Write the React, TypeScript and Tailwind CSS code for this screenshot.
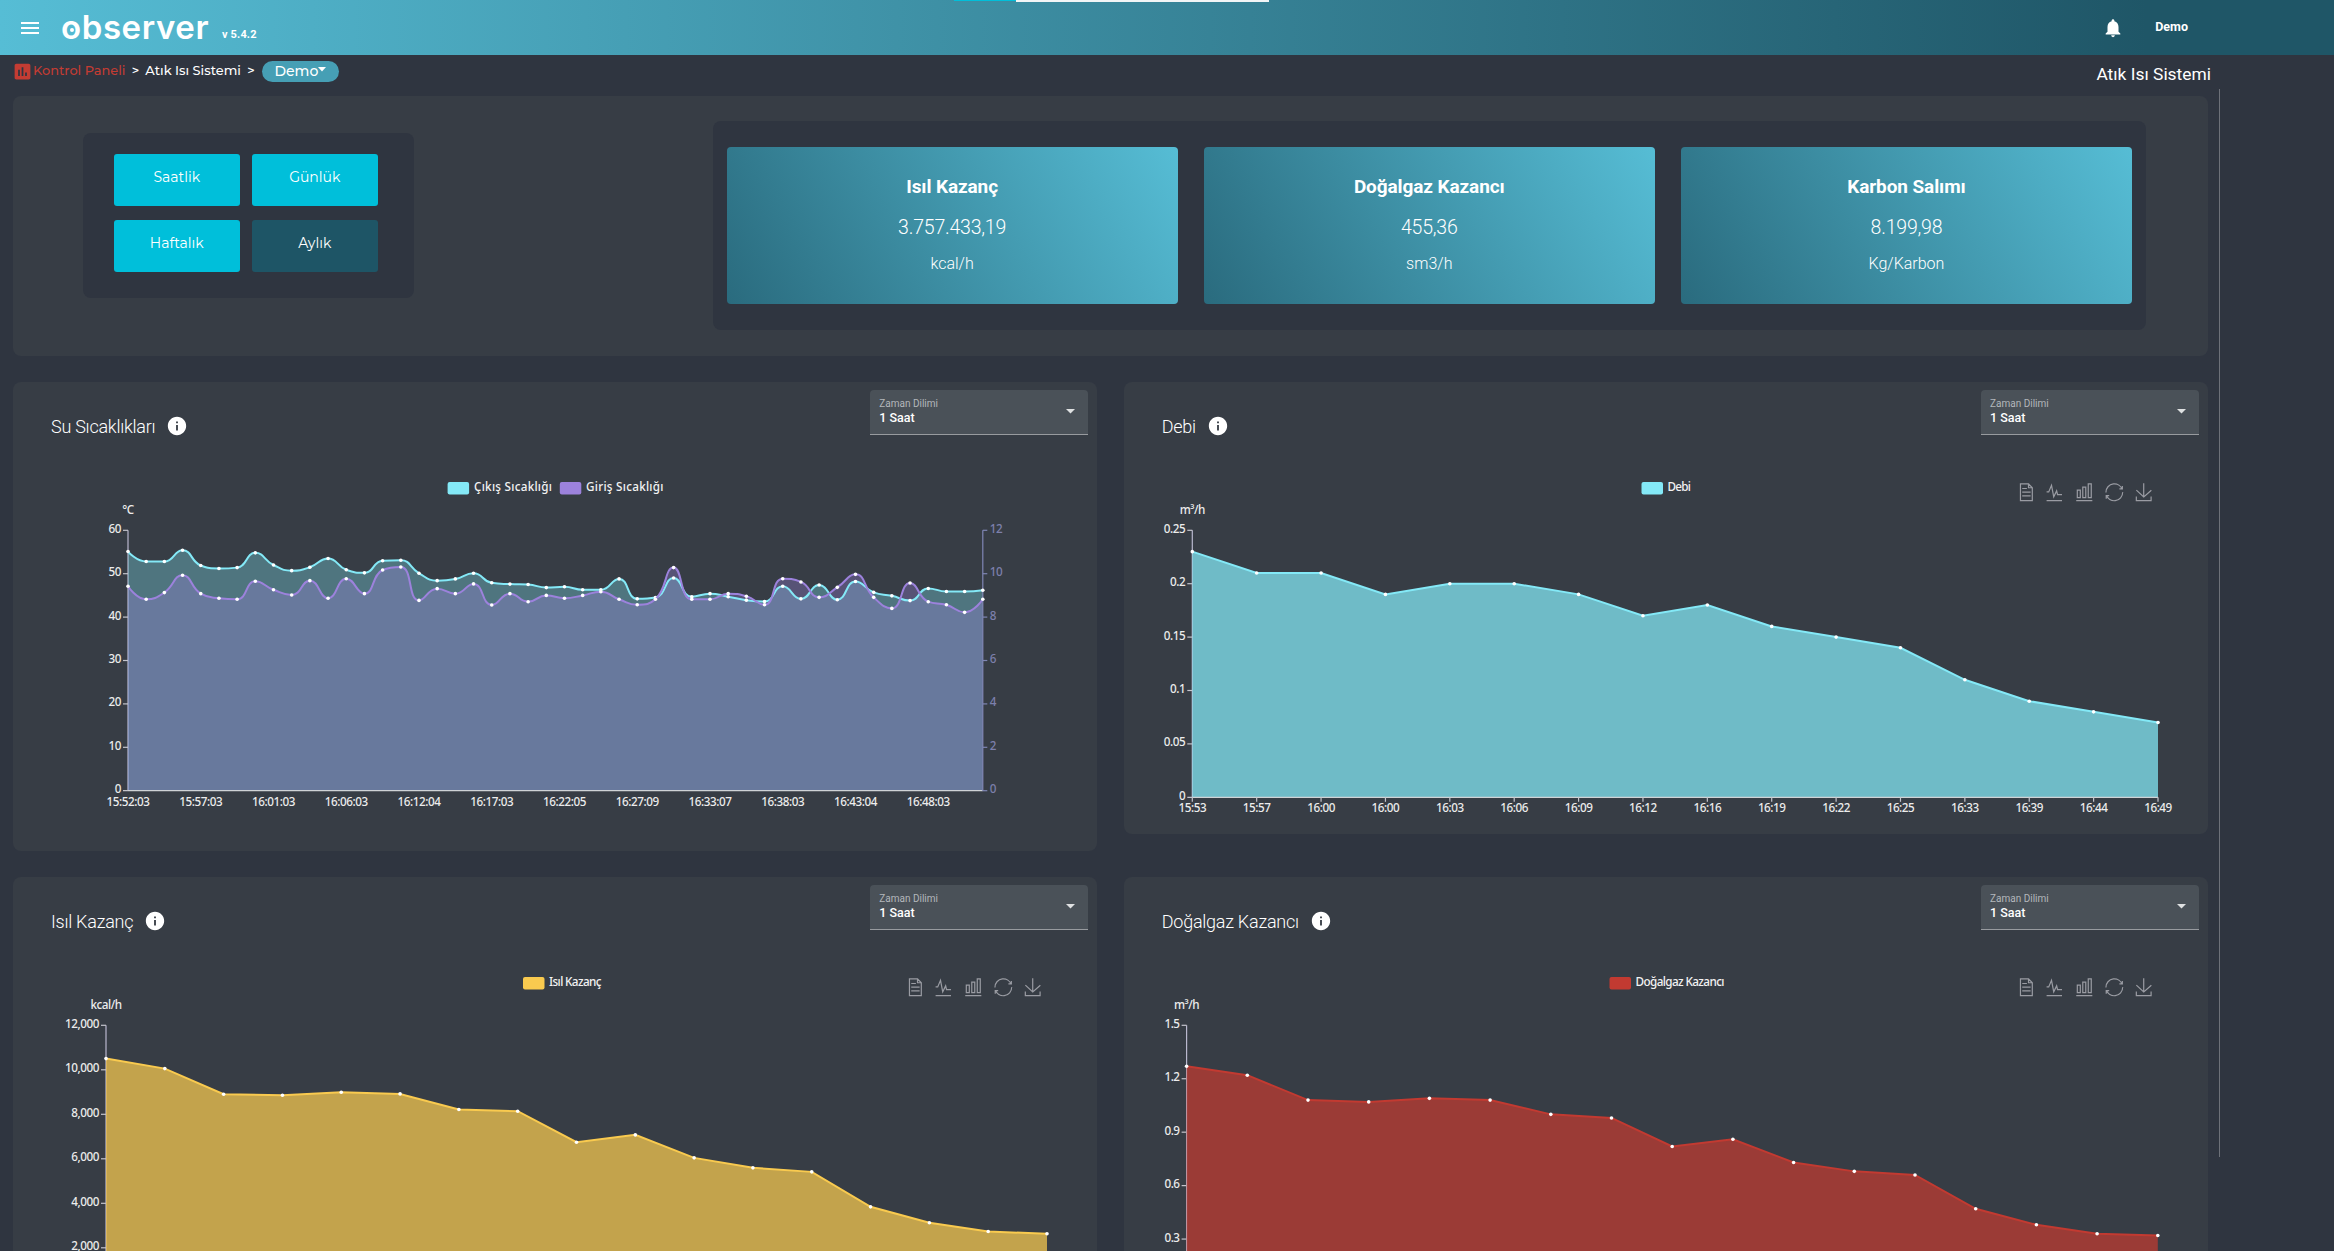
import React from "react";
import { MdAssessment, MdInfo, MdMenu, MdNotifications } from "react-icons/md";

type Point = { x: number; y: number };

type Axis = {
  max: number;
  labels: string[];
};

type Series = {
  name: string;
  color: string;
  data: number[];
  max: number;
  opacity: number;
  smooth?: boolean;
};

type ChartProps = {
  unit: string;
  left: number;
  right: number;
  bottom: number;
  height: number;
  axis: Axis;
  rightAxis?: Axis;
  xLabels: string[];
  xEvery: number;
  xTicks?: boolean;
  series: Series[];
  legend: { swatch: number; text: number; width: number }[];
  toolbox?: boolean;
};

const TOP = 148.3;

const outTemps = [
  55.1, 52.8, 52.8, 55.4, 51.9, 51.2, 51.4, 54.8, 52, 50.7, 51.5, 53.5, 50.9, 50.2, 53, 53.1, 50.1, 48.4, 48.8, 50.1,
  47.9, 47.6, 47.5, 46.8, 47, 46.3, 46.3, 48.8, 44.2, 44.5, 49, 44.7, 45.4, 44.7, 43.9, 43.6, 47.1, 44.2, 47.4, 44,
  48.2, 45.7, 44.9, 43.8, 46.6, 45.9, 45.9, 46.2,
];

const inTemps = [
  9.42, 8.82, 9.13, 9.93, 9.08, 8.87, 8.82, 9.65, 9.26, 9.02, 9.68, 8.87, 9.77, 9.08, 10.17, 10.31, 8.77, 9.31, 9.08,
  9.53, 8.56, 9.08, 8.71, 9, 8.87, 9, 9.17, 8.82, 8.57, 8.82, 10.28, 8.82, 8.82, 9.08, 8.96, 8.57, 9.77, 9.62, 8.91,
  9.37, 9.97, 8.91, 8.4, 9.57, 8.71, 8.57, 8.22, 8.82,
];

const flow = [0.23, 0.21, 0.21, 0.19, 0.2, 0.2, 0.19, 0.17, 0.18, 0.16, 0.15, 0.14, 0.11, 0.09, 0.08, 0.07];

const heat = [
  10503, 10054, 8901, 8856, 8991, 8916, 8213, 8138, 6745, 7075, 6042, 5593, 5413, 3841, 3123, 2733, 2629,
];

const gas = [1.27, 1.22, 1.08, 1.07, 1.09, 1.08, 1, 0.98, 0.82, 0.86, 0.73, 0.68, 0.66, 0.47, 0.38, 0.33, 0.32];

// cx is the horizontal middle of each path
const tools = [
  {
    x: 902.3,
    cx: 31,
    d: "M17.5,17.3H33 M45.4,29.5h-28 M11.5,2v56H51V14.8L38.4,2H11.5z M38.4,2.2v12.7H51 M45.4,41.7h-28",
  },
  { x: 930.3, cx: 29.8, d: "M4.1,28.9h7.1l9.3-22l7.4,38l9.7-19.7l3,12.8h14.9M4.1,58h51.4" },
  { x: 960.3, cx: 30, d: "M6.7,22.9h10V48h-10V22.9zM24.9,13h10v35h-10V13zM43.2,2h10v46h-10V2zM3.1,58h53.7" },
  {
    x: 990.3,
    cx: 30,
    d: "M47,18.9h9.8V8.7 M56.3,20.1 C52.1,9,40.5,0.6,26.8,2.1C12.6,3.7,1.6,16.2,2.1,30.6 M13,41.1H3.1v10.2 M3.7,39.9c4.2,11.1,15.8,19.5,29.5,18 c14.2-1.6,25.2-14.1,24.7-28.5",
  },
  { x: 1019.8, cx: 29.5, d: "M4.7,22.9L29.3,45.5L54.7,23.4M4.6,43.6L4.6,58L53.8,58L53.8,43.6M29.2,45.1L29.2,0" },
];

const clamp = (v: number, a: number, b: number) => Math.max(Math.min(v, Math.max(a, b)), Math.min(a, b));

function straightPath(pts: Point[]) {
  return pts.map((p, i) => `${i ? "L" : "M"}${p.x},${p.y}`).join("");
}

function smoothPath(pts: Point[]) {
  let d = `M${pts[0].x},${pts[0].y}`;
  let cp = pts[0];
  for (let i = 1; i < pts.length; i++) {
    const p = pts[i];
    const prev = pts[i - 1];
    const next = pts[i + 1];
    let before = p;
    let after = p;
    if (next) {
      const lenPrev = Math.hypot(p.x - prev.x, p.y - prev.y);
      const lenNext = Math.hypot(next.x - p.x, next.y - p.y);
      const ratio = lenNext / (lenNext + lenPrev);
      const vx = (next.x - prev.x) * 0.5;
      const vy = (next.y - prev.y) * 0.5;
      after = { x: clamp(p.x + vx * ratio, p.x, next.x), y: clamp(p.y + vy * ratio, p.y, next.y) };
      const k = lenPrev / lenNext;
      before = {
        x: clamp(p.x - (after.x - p.x) * k, prev.x, p.x),
        y: clamp(p.y - (after.y - p.y) * k, prev.y, p.y),
      };
      after = { x: p.x + (p.x - before.x) / k, y: p.y + (p.y - before.y) / k };
    }
    d += `C${cp.x},${cp.y} ${before.x},${before.y} ${p.x},${p.y}`;
    cp = after;
  }
  return d;
}

function Chart(props: ChartProps) {
  const { unit, left, right, bottom, height, axis, rightAxis, xLabels, xEvery, xTicks, series, legend, toolbox } = props;
  const count = series[0].data.length;
  const step = (right - left) / (count - 1);
  const tickY = (i: number, n: number) => bottom - ((bottom - TOP) * i) / (n - 1);

  return (
    <svg
      width="1084"
      height={height}
      viewBox={`0 62 1084 ${height}`}
      className="block shrink-0 font-['Noto_Sans','Open_Sans',sans-serif] text-[11.7px] tracking-[-0.45px] font-medium"
    >
      {series.map((s, i) => (
        <g key={s.name}>
          <rect x={legend[i].swatch} y={100} width={21.5} height={12.5} rx={2} fill={s.color} />
          <text x={legend[i].text} y={109} textLength={legend[i].width} fill="#f2f2f2">
            {s.name}
          </text>
        </g>
      ))}

      {toolbox &&
        tools.map((t) => (
          <path
            key={t.x}
            d={t.d}
            transform={`translate(${t.x - t.cx * 0.3} ${110.3 - 9}) scale(0.3)`}
            fill="none"
            stroke="#9a9ca3"
            strokeWidth={4}
          />
        ))}

      <text x={left} y={132} textAnchor="middle" fill="#ececec">
        {unit}
      </text>
      <path d={`M${left},${TOP}V${bottom}`} stroke="#b9b8ce" strokeWidth={1.2} />
      {axis.labels.map((l, i) => (
        <g key={l}>
          <path d={`M${left - 5},${tickY(i, axis.labels.length)}h5`} stroke="#c4c4cc" strokeWidth={1.2} />
          <text x={left - 7} y={tickY(i, axis.labels.length) + 2.5} textAnchor="end" fill="#ececec">
            {l}
          </text>
        </g>
      ))}

      {series.map((s) => {
        const pts = s.data.map((v, i) => ({ x: left + step * i, y: bottom - (v / s.max) * (bottom - TOP) }));
        const line = s.smooth ? smoothPath(pts) : straightPath(pts);
        return (
          <path key={s.name} d={`${line}V${bottom}H${left}Z`} fill={s.color} fillOpacity={s.opacity} />
        );
      })}

      <path d={`M${left},${bottom}H${right}`} stroke="#cfd3d6" strokeWidth={1.3} />
      {xLabels.map((l, i) => (
        <g key={i}>
          {xTicks && <path d={`M${left + step * i * xEvery},${bottom}v4.5`} stroke="#c4c4cc" strokeWidth={1.2} />}
          <text x={left + step * i * xEvery} y={bottom + 15} textAnchor="middle" fill="#ececec">
            {l}
          </text>
        </g>
      ))}

      {rightAxis && (
        <g>
          <path d={`M${right},${TOP}V${bottom}`} stroke="#7f86b4" strokeWidth={1.2} />
          {rightAxis.labels.map((l, i) => (
            <g key={l}>
              <path d={`M${right},${tickY(i, rightAxis.labels.length)}h4.5`} stroke="#7f86b4" strokeWidth={1.2} />
              <text x={right + 7} y={tickY(i, rightAxis.labels.length) + 2.5} fill="#7d80ac">
                {l}
              </text>
            </g>
          ))}
        </g>
      )}

      {series.map((s) => {
        const pts = s.data.map((v, i) => ({ x: left + step * i, y: bottom - (v / s.max) * (bottom - TOP) }));
        return (
          <g key={s.name}>
            <path d={s.smooth ? smoothPath(pts) : straightPath(pts)} fill="none" stroke={s.color} strokeWidth={2} />
            {pts.map((p, i) => (
              <circle key={i} cx={p.x} cy={p.y} r={1.8} fill="#ffffff" />
            ))}
          </g>
        );
      })}
    </svg>
  );
}

function TimeSelect() {
  return (
    <div className="mt-[8px] mr-[9px] w-[217.5px] h-[45.5px] rounded-t bg-[#4a5158] border-b border-[#989b9f] flex items-center justify-between pl-[9px] pr-[13px]">
      <div>
        <p className="text-[10px] leading-[13px] text-[#b3b7bb]">Zaman Dilimi</p>
        <p className="text-[12.5px] leading-4 font-medium text-white">1 Saat</p>
      </div>
      <svg width="9" height="5" viewBox="0 0 9 5">
        <path d="M0 0h9L4.5 4.5z" fill="#dfe1e2" />
      </svg>
    </div>
  );
}

function Panel({ title, className, children }: { title: string; className: string; children: React.ReactNode }) {
  return (
    <section className={`rounded-lg bg-[#373d45] overflow-hidden ${className}`}>
      <div className="h-[62px] flex justify-between">
        <div className="flex items-start gap-[11px] pl-[38px] pt-[33px]">
          <h3 className="font-light text-[18px] leading-6 tracking-[-0.25px] text-white">{title}</h3>
          <MdInfo className="size-[22px] text-white" />
        </div>
        <TimeSelect />
      </div>
      {children}
    </section>
  );
}

function PeriodButton({ label, active }: { label: string; active?: boolean }) {
  return (
    <button
      className={`w-[125.5px] h-[52px] rounded-[3px] pb-[5px] text-[14px] text-white ${
        active ? "bg-[#1e5566]" : "bg-[#00bfda]"
      }`}
    >
      {label}
    </button>
  );
}

function StatCard({ title, value, unit }: { title: string; value: string; unit: string }) {
  return (
    <div className="flex-1 h-[156.5px] rounded bg-[linear-gradient(60deg,#2a6b7e,#56bdd5)] text-white text-center pt-7">
      <p className="text-[19px] leading-6 font-bold tracking-[-0.1px]">{title}</p>
      <p className="mt-[17px] text-[19.5px] leading-6 font-light tracking-[-0.2px]">{value}</p>
      <p className="mt-3.5 text-[16px] leading-5 font-light">{unit}</p>
    </div>
  );
}

export default function App() {
  return (
    <div className="w-full h-[1251px] overflow-hidden bg-[#2f3540] font-[Roboto,sans-serif]">
      <header className="relative h-[55px] flex items-center bg-[linear-gradient(90deg,#56bdd5_0%,#1f5667_92%)] text-white">
        <MdMenu className="ml-[18px] size-6" />
        <h1 className="relative ml-[19px] w-[149px] font-[Inter,sans-serif] font-semibold text-[33px] leading-none tracking-[0.6px]">
          observer
          <span className="absolute left-[9px] top-[17px] size-[4px] rounded-full bg-white" />
        </h1>
        <span className="ml-3 mt-4 text-[11px] font-bold tracking-[0.15px]">v 5.4.2</span>
        <MdNotifications className="ml-auto size-[22px]" />
        <span className="ml-[31px] mr-[146px] text-[12.5px] font-bold">Demo</span>
        {/* loading bar */}
        <div className="absolute top-0 left-[954px] w-[315px] h-[2px] flex">
          <span className="w-[62px] h-px bg-[#00bfda]" />
          <span className="flex-1 bg-[#f2f5f6]" />
        </div>
      </header>

      <div className="h-[34px] w-[2220px] flex items-start justify-between text-white">
        <nav className="flex items-center pl-3 pt-1.5 h-[26px] font-[Montserrat,Inter,sans-serif] text-[12.9px] font-medium">
          <MdAssessment className="size-[21px] text-[#c43c33]" />
          <span className="text-[#c43c33]">Kontrol Paneli</span>
          <span className="ml-[6.5px]">&gt;</span>
          <span className="ml-[6px]">Atık Isı Sistemi</span>
          <span className="ml-[6.5px]">&gt;</span>
          <span className="ml-[7px] h-[21px] w-[77px] rounded-full bg-[#469fb5] flex items-center justify-center text-[14px]">
            Demo
            <svg width="8" height="5" viewBox="0 0 8 5" className="mb-1">
              <path d="M0 0h8L4 4.5z" fill="#ffffff" />
            </svg>
          </span>
        </nav>
        <h2 className="mr-[9px] pt-[5.5px] text-[17.4px]">Atık Isı Sistemi</h2>
      </div>

      <div className="flex">
        <main className="w-[2219px] shrink-0 pl-[13px] pr-[11.5px] pt-[6.5px]">
          <section className="h-[260px] rounded-lg bg-[#373d45] flex items-start justify-between pl-[70px] pr-[62px]">
            <div className="mt-[37px] w-[331px] h-[165px] rounded-lg bg-[#2f3540] pl-[31px] pt-[21.5px] grid grid-cols-[125.5px_125.5px] grid-rows-[52.5px_52.5px] gap-x-[12.5px] gap-y-[13.5px] font-[Montserrat,Inter,sans-serif]">
              <PeriodButton label="Saatlik" />
              <PeriodButton label="Günlük" />
              <PeriodButton label="Haftalık" />
              <PeriodButton label="Aylık" active />
            </div>
            <div className="mt-[25.5px] w-[1432.5px] h-[208.5px] rounded-lg bg-[#2f3540] flex gap-[26px] px-[13.5px] pt-[26px]">
              <StatCard title="Isıl Kazanç" value="3.757.433,19" unit="kcal/h" />
              <StatCard title="Doğalgaz Kazancı" value="455,36" unit="sm3/h" />
              <StatCard title="Karbon Salımı" value="8.199,98" unit="Kg/Karbon" />
            </div>
          </section>

          <div className="mt-[26px] grid grid-cols-2 gap-x-[27px] gap-y-[26px] items-start">
            <Panel title="Su Sıcaklıkları" className="h-[469px]">
              <Chart
                unit="°C"
                left={115}
                right={969.8}
                bottom={408.7}
                height={400}
                axis={{ max: 60, labels: ["0", "10", "20", "30", "40", "50", "60"] }}
                rightAxis={{ max: 12, labels: ["0", "2", "4", "6", "8", "10", "12"] }}
                xLabels={[
                  "15:52:03",
                  "15:57:03",
                  "16:01:03",
                  "16:06:03",
                  "16:12:04",
                  "16:17:03",
                  "16:22:05",
                  "16:27:09",
                  "16:33:07",
                  "16:38:03",
                  "16:43:04",
                  "16:48:03",
                ]}
                xEvery={4}
                series={[
                  { name: "Çıkış Sıcaklığı", color: "#84e9f7", data: outTemps, max: 60, opacity: 0.33, smooth: true },
                  { name: "Giriş Sıcaklığı", color: "#9c82dc", data: inTemps, max: 12, opacity: 0.33, smooth: true },
                ]}
                legend={[
                  { swatch: 434.6, text: 461, width: 77.5 },
                  { swatch: 546.8, text: 573, width: 77 },
                ]}
              />
            </Panel>

            <Panel title="Debi" className="h-[452px]">
              <Chart
                unit="m³/h"
                left={68.3}
                right={1034}
                bottom={415.3}
                height={390}
                axis={{ max: 0.25, labels: ["0", "0.05", "0.1", "0.15", "0.2", "0.25"] }}
                xLabels={[
                  "15:53",
                  "15:57",
                  "16:00",
                  "16:00",
                  "16:03",
                  "16:06",
                  "16:09",
                  "16:12",
                  "16:16",
                  "16:19",
                  "16:22",
                  "16:25",
                  "16:33",
                  "16:39",
                  "16:44",
                  "16:49",
                ]}
                xEvery={1}
                xTicks
                series={[{ name: "Debi", color: "#84e9f7", data: flow, max: 0.25, opacity: 0.735 }]}
                legend={[{ swatch: 517.5, text: 543.5, width: 23 }]}
                toolbox
              />
            </Panel>

            <Panel title="Isıl Kazanç" className="h-[469px]">
              <Chart
                unit="kcal/h"
                left={93}
                right={1034}
                bottom={415.3}
                height={400}
                axis={{ max: 12000, labels: ["0", "2,000", "4,000", "6,000", "8,000", "10,000", "12,000"] }}
                xLabels={[]}
                xEvery={1}
                series={[{ name: "Isıl Kazanç", color: "#f9ca4f", data: heat, max: 12000, opacity: 0.72 }]}
                legend={[{ swatch: 510, text: 536, width: 52 }]}
                toolbox
              />
            </Panel>

            <Panel title="Doğalgaz Kazancı" className="h-[469px]">
              <Chart
                unit="m³/h"
                left={62.6}
                right={1033.8}
                bottom={415.5}
                height={400}
                axis={{ max: 1.5, labels: ["0", "0.3", "0.6", "0.9", "1.2", "1.5"] }}
                xLabels={[]}
                xEvery={1}
                series={[{ name: "Doğalgaz Kazancı", color: "#c23a31", data: gas, max: 1.5, opacity: 0.72 }]}
                legend={[{ swatch: 485.5, text: 511.5, width: 88.5 }]}
                toolbox
              />
            </Panel>
          </div>
        </main>
        <div className="w-px h-[1068px] bg-[#6d7179]" />
      </div>
    </div>
  );
}
